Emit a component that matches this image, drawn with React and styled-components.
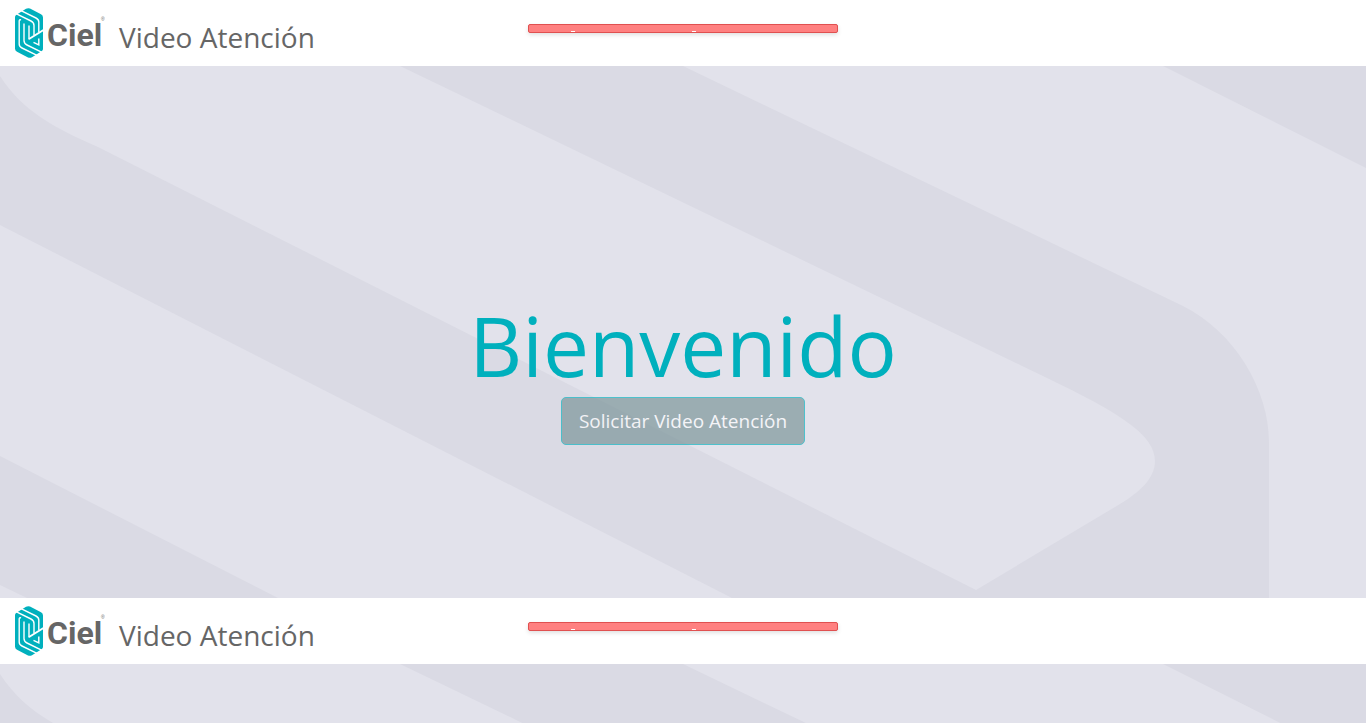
import React from "react";
import styled, { createGlobalStyle } from "styled-components";

const GlobalStyle = createGlobalStyle`
  *, *::before, *::after { box-sizing: border-box; }
  body {
    margin: 0;
    background: #fff;
    color: #666;
    font-family: "Open Sans", "Noto Sans", sans-serif;
  }
`;

const Page = styled.div`
  display: flex;
  flex-direction: column;
  height: 100vh;
  overflow: hidden;
`;

const Header = styled.header`
  display: grid;
  grid-template-columns: 1fr 310px 1fr;
  flex: none;
  padding: 8px 15px;
  background: #fff;
`;

const Brand = styled.div`
  display: flex;
  align-items: center;
  gap: 14px;
  height: 50px;
`;

const Logo = styled.svg`
  flex: none;
  width: 90px;
  height: 50px;
`;

const LogoName = styled.text`
  fill: #666;
  font: bold 32px Roboto, sans-serif;
`;

const LogoMark = styled.text`
  fill: #666;
  font: 5px "Liberation Sans", sans-serif;
`;

const BrandTitle = styled.h2`
  margin: 8px 0 0;
  font-size: 28px;
  font-weight: 400;
  line-height: 40px;
  white-space: nowrap;
`;

const Alert = styled.div`
  display: flex;
  align-items: flex-end;
  gap: 117px;
  height: 9px;
  margin-top: 16px;
  padding-left: 42px;
  border: 1px solid #e05050;
  border-radius: 2px;
  background: #ff8080;
  box-shadow: 0 2px 4px rgba(0, 0, 0, 0.12);
`;

const AlertTick = styled.span`
  width: 4px;
  height: 1px;
  background: #fff;
`;

const Stage = styled.main`
  position: relative;
  display: flex;
  flex-direction: column;
  align-items: center;
  flex: ${(p) => (p.$fill ? "1 0 0" : "none")};
  padding: ${(p) => (p.$fill ? "0" : "231px 0 153px")};
  overflow: hidden;
  background: #e2e2eb;
`;

const Backdrop = styled.svg`
  position: absolute;
  inset: 0;
  width: 100%;
  height: 100%;
`;

const Welcome = styled.h1`
  position: relative;
  margin: 0 0 4px;
  color: #00b0bd;
  font-size: 82px;
  font-weight: 400;
  line-height: 96px;
`;

const RequestButton = styled.button`
  position: relative;
  padding: 8px 17px;
  border: 1px solid #00b0bd;
  border-radius: 5px;
  background: #769195;
  color: #fff;
  font-family: inherit;
  font-size: 19px;
  line-height: 30px;
  opacity: 0.65;
`;

function CielLogo() {
  return (
    <Logo viewBox="0 0 90 50" role="img" aria-label="Ciel">
      <path
        fill="#00b0bd"
        d="M11 .8 Q13 -.4 15 .6 L26 6.2 Q28 7.2 28 9.4 V41 Q28 42.6 26.5 43.3 L17 49.2 Q15 50.4 13 49.4 L2 43.8 Q0 42.8 0 40.6 V9 Q0 7.4 1.5 6.7 Z"
      />
      <g fill="none" stroke="#fff" strokeWidth="1.4">
        <path d="M6 2.6 L21 10 Q23.8 11.4 23.8 14 V24" />
        <path d="M1 5.6 L16 13 Q19 14.5 19 17.5 V27" />
        <path d="M22 47.4 L7 40 Q4.2 38.6 4.2 36 V13 Q4.2 11.2 6 12" />
        <path d="M27 44.4 L12 37 Q9 35.5 9 32.5 V15.5" />
        <path d="M14 17.5 V31.5" />
        <path d="M28.5 22 L14 31 " strokeWidth="2" />
        <path d="M23.8 30.5 V37 L18.5 34.4" />
      </g>
      <LogoName x="32" y="38">Ciel</LogoName>
      <LogoMark x="86" y="13">®</LogoMark>
    </Logo>
  );
}

function Bands() {
  return (
    <Backdrop viewBox="0 0 1366 532" preserveAspectRatio="xMinYMin slice" aria-hidden="true">
      <g fill="#dadae4">
        <path d="M0 10 C22 44 52 61 98 81 L976 524 L1120 438 C1140 426 1155 412 1155 395 C1155 369 1120 347 1047 312 L680 135 L400 0 H683 L1183 240 C1235 266 1269 324 1269 376 V532 H732 L0 159 Z" />
        <path d="M0 390 L278 532 H27 L0 519 Z" />
        <path d="M1163 0 H1366 V102 Z" />
      </g>
    </Backdrop>
  );
}

function TopBar() {
  return (
    <Header>
      <Brand>
        <CielLogo />
        <BrandTitle>Video Atención</BrandTitle>
      </Brand>
      <Alert role="alert">
        <AlertTick />
        <AlertTick />
      </Alert>
    </Header>
  );
}

export default function App() {
  return (
    <Page>
      <GlobalStyle />
      <TopBar />
      <Stage>
        <Bands />
        <Welcome>Bienvenido</Welcome>
        <RequestButton type="button" disabled>
          Solicitar Video Atención
        </RequestButton>
      </Stage>
      <TopBar />
      <Stage as="section" $fill>
        <Bands />
      </Stage>
    </Page>
  );
}
